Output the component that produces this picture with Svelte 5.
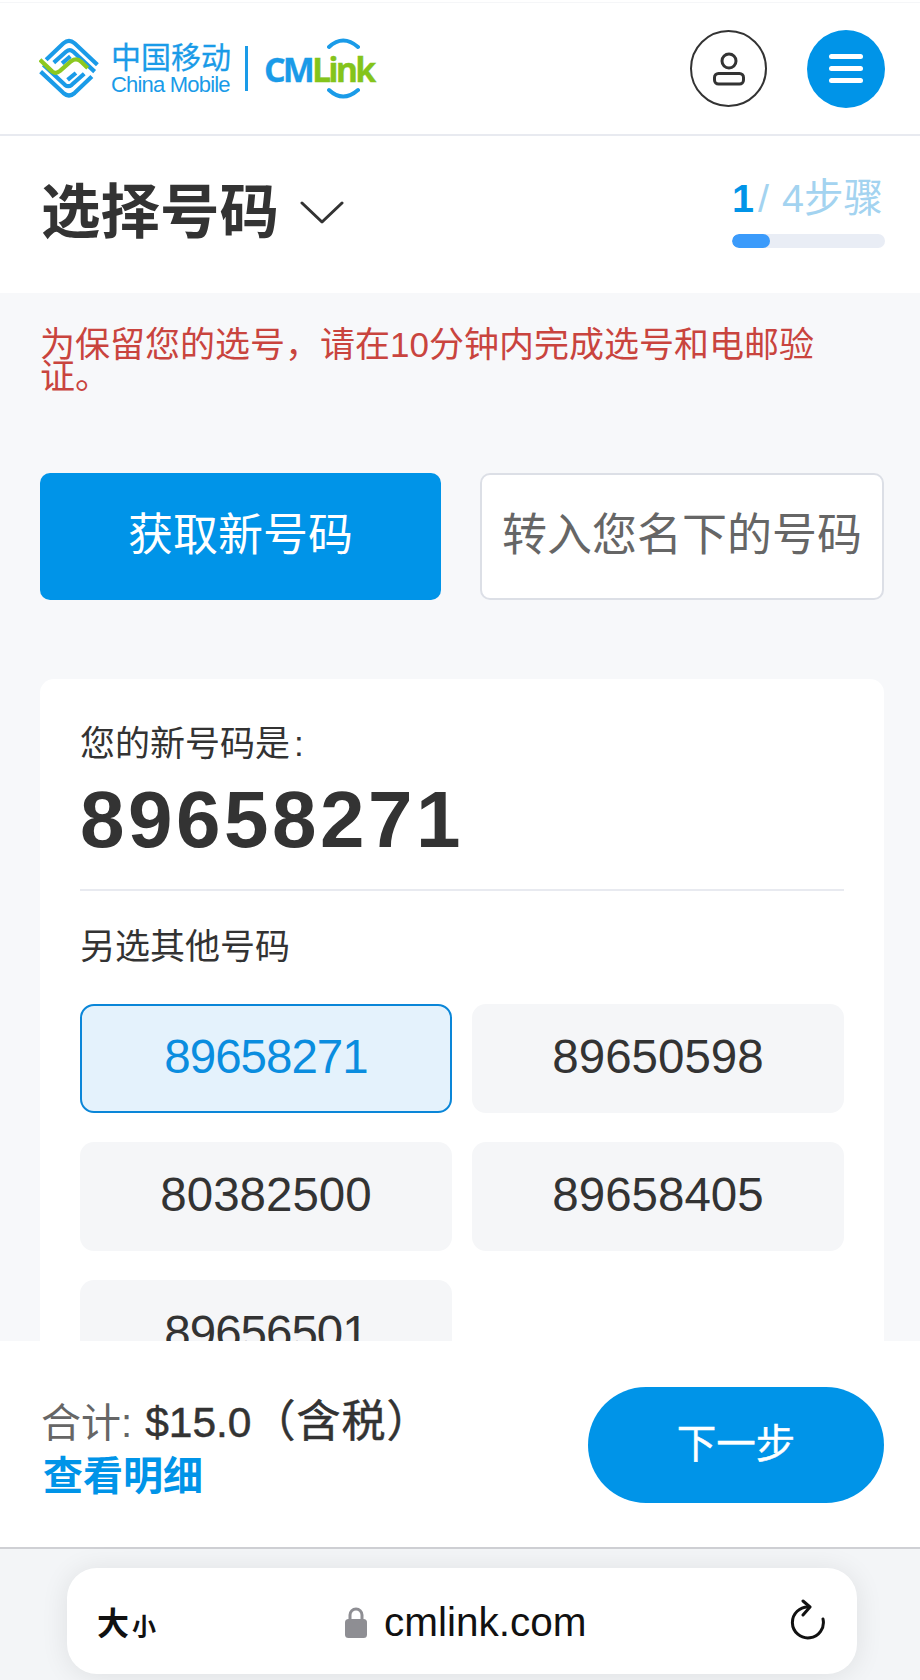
<script>
  const options = [
    { num: '89658271', selected: true, tight: true },
    { num: '89650598', selected: false, tight: false },
    { num: '80382500', selected: false, tight: false },
    { num: '89658405', selected: false, tight: false },
    { num: '89656501', selected: false, tight: true }
  ];
</script>

<div class="page">
  <header class="topbar">
    <div class="logo">
      <svg class="mark" viewBox="32 26 172 182" aria-hidden="true">
        <g fill="none" stroke="#1a9be8" stroke-width="12" stroke-linecap="butt" stroke-linejoin="round">
          <path d="M52 92 L102 44 Q118 30 134 44 L200 106" />
          <path d="M74 100 L110 68 Q120 60 130 68 L192 126" />
          <path d="M98 102 L122 82" />
          <path d="M184 140 L134 188 Q118 202 102 188 L36 126" />
          <path d="M162 132 L126 164 Q116 172 106 164 L44 106" />
          <path d="M138 130 L114 150" />
        </g>
        <path d="M34 92 L70 126 Q80 134 92 124 L124 96 Q140 84 154 98 L172 116" fill="none" stroke="#8cc820" stroke-width="12" />
      </svg>
      <div class="brand-text">
        <span class="cn">中国移动</span>
        <span class="en">China Mobile</span>
      </div>
      <span class="sep"></span>
      <div class="cmlink">
        <svg class="arcs" viewBox="0 0 33 62" aria-hidden="true">
          <path d="M2 9 Q16 -4 31 9" fill="none" stroke="#1a9be8" stroke-width="4" stroke-linecap="round" />
          <path d="M2 52 Q16 65 31 52" fill="none" stroke="#1a9be8" stroke-width="4" stroke-linecap="round" />
        </svg>
        <span class="cm">CM</span><span class="link">Link</span>
      </div>
    </div>
    <div class="top-actions">
      <button class="round user" aria-label="账户">
        <svg viewBox="0 0 40 40" width="40" height="40" aria-hidden="true">
          <circle cx="20" cy="12" r="7" fill="none" stroke="#333" stroke-width="3" />
          <rect x="5.500" y="24.500" width="29" height="10.500" rx="4" fill="none" stroke="#333" stroke-width="3" />
        </svg>
      </button>
      <button class="round menu" aria-label="菜单">
        <span></span><span></span><span></span>
      </button>
    </div>
  </header>

  <section class="title-row">
    <div class="title">
      <h1>选择号码</h1>
      <svg class="chevron" viewBox="0 0 44 24" aria-hidden="true">
        <path d="M2 3 L22 22 L42 3" fill="none" stroke="#333" stroke-width="3" stroke-linecap="round" stroke-linejoin="round" />
      </svg>
    </div>
    <div class="steps">
      <div class="steps-text"><b>1</b><span>/ 4步骤</span></div>
      <div class="track"><div class="fill" style="width: 25%"></div></div>
    </div>
  </section>

  <main class="content">
    <p class="warning">为保留您的选号，请在10分钟内完成选号和电邮验证。</p>

    <div class="choice">
      <button class="choice-btn on">获取新号码</button>
      <button class="choice-btn off">转入您名下的号码</button>
    </div>

    <section class="card">
      <div class="label">您的新号码是<span class="colon">:</span></div>
      <div class="big">89658271</div>
      <hr />
      <div class="label other">另选其他号码</div>
      <div class="grid">
        {#each options as o}
          <button class="opt" class:selected={o.selected} class:tight={o.tight}>{o.num}</button>
        {/each}
      </div>
    </section>
  </main>

  <footer class="summary">
    <div class="price">
      <div class="total"><span class="t-label">合计:</span><span class="t-value">$15.0<span class="tax">（含税）</span></span></div>
      <a class="details" href="#details">查看明细</a>
    </div>
    <button class="next">下一步</button>
  </footer>

  <div class="browser">
    <div class="pill">
      <span class="aa"><b>大</b><b class="small">小</b></span>
      <span class="url">
        <svg class="lock" viewBox="0 0 22 32" aria-hidden="true">
          <path d="M5 15 V9 A6 6 0 0 1 17 9 V15" fill="none" stroke="#8e8e93" stroke-width="3" />
          <rect x="0" y="13" width="22" height="19" rx="3.500" fill="#8e8e93" />
        </svg>
        cmlink.com
      </span>
      <svg class="reload" viewBox="0 0 36 44" aria-hidden="true">
        <path d="M19 8 A15.500 15.500 0 1 0 33 20" fill="none" stroke="#111" stroke-width="3" stroke-linecap="round" />
        <path d="M13 2 L20 8 L13 16" fill="none" stroke="#111" stroke-width="3" stroke-linecap="round" stroke-linejoin="round" />
      </svg>
    </div>
  </div>
</div>

<style>
  :global(body) {
    margin: 0;
    background: #fff;
  }

  .page {
    width: 920px;
    height: 1680px;
    display: flex;
    flex-direction: column;
    overflow: hidden;
    color: #333;
    font-family: "Liberation Sans", "Noto Sans CJK SC", sans-serif;
  }

  button {
    font-family: inherit;
    border: 0;
    padding: 0;
    margin: 0;
  }

  .topbar {
    flex: none;
    height: 131px;
    margin-top: 2px;
    border-top: 1px solid #f5f6f8;
    border-bottom: 2px solid #e8eaf0;
    display: flex;
    align-items: center;
    justify-content: space-between;
    padding: 0 35px 0 39px;
    box-sizing: content-box;
    background: #fff;
  }

  .logo {
    display: flex;
    align-items: center;
  }

  .mark {
    width: 60px;
    height: 63px;
    display: block;
  }

  .brand-text {
    margin-left: 12px;
    display: flex;
    flex-direction: column;
    color: #1a9be8;
  }

  .cn {
    font-size: 30px;
    line-height: 33px;
    white-space: nowrap;
    -webkit-text-stroke: 0.300px #1a9be8;
  }

  .en {
    font-size: 22px;
    line-height: 22px;
    letter-spacing: -0.800px;
    white-space: nowrap;
  }

  .sep {
    width: 3px;
    height: 45px;
    margin-left: 14px;
    background: #1a9be8;
  }

  .cmlink {
    margin-left: 16px;
    position: relative;
    font-family: "Open Sans", sans-serif;
    font-weight: 700;
    font-size: 34px;
    line-height: 62px;
    letter-spacing: -2.900px;
    white-space: nowrap;
    -webkit-text-stroke: 0.300px currentColor;
  }

  .arcs {
    position: absolute;
    left: 63px;
    top: 0;
    width: 33px;
    height: 62px;
  }

  .cm {
    color: #1a9be8;
  }

  .link {
    color: #84c41b;
  }

  .top-actions {
    display: flex;
    align-items: center;
    gap: 40px;
  }

  .round {
    width: 78px;
    height: 78px;
    border-radius: 50%;
    box-sizing: border-box;
    display: flex;
    align-items: center;
    justify-content: center;
  }

  .user {
    width: 77px;
    height: 77px;
    background: #fff;
    border: 2px solid #333;
  }

  .menu {
    background: #0094e8;
    flex-direction: column;
    gap: 7px;
  }

  .menu span {
    display: block;
    width: 34px;
    height: 5px;
    border-radius: 3px;
    background: #fff;
  }

  .title-row {
    flex: none;
    height: 157px;
    background: #fff;
    display: flex;
    justify-content: space-between;
    padding: 0 35px 0 41px;
  }

  .title {
    display: flex;
    align-items: center;
    gap: 21px;
    height: 154px;
  }

  h1 {
    margin: 0;
    font-size: 59.500px;
    font-weight: 700;
    line-height: 70px;
    color: #333;
  }

  .chevron {
    width: 44px;
    height: 24px;
    margin-top: -2px;
  }

  .steps {
    width: 153px;
    padding-top: 38px;
  }

  .steps-text {
    font-size: 39.500px;
    line-height: 48px;
    white-space: nowrap;
    word-spacing: 2px;
    color: #a3d3f0;
  }

  .steps-text b {
    color: #0094e8;
    font-weight: 700;
    margin-right: 6px;
    letter-spacing: -2px;
  }

  .track {
    margin-top: 12px;
    height: 14px;
    border-radius: 7px;
    background: #e9edf5;
    overflow: hidden;
  }

  .fill {
    height: 100%;
    border-radius: 7px;
    background: #3b9bfb;
  }

  .content {
    flex: 1;
    min-height: 0;
    overflow: hidden;
    background: #f7f8fa;
    padding: 36px 36px 0 40px;
  }

  .warning {
    margin: 0;
    max-width: 830px;
    font-size: 35px;
    line-height: 32px;
    color: #c9443e;
  }

  .choice {
    margin-top: 80px;
    display: grid;
    grid-template-columns: 401px 404px;
    gap: 39px;
  }

  .choice-btn {
    height: 127px;
    border-radius: 10px;
    font-size: 45px;
    white-space: nowrap;
    box-sizing: border-box;
    padding-bottom: 11px;
  }

  .on {
    background: #0094e8;
    color: #fff;
  }

  .off {
    background: #fff;
    color: #666;
    border: 2px solid #dcdfe6;
  }

  .card {
    margin-top: 79px;
    background: #fff;
    border-radius: 14px;
    padding: 45px 40px 60px;
  }

  .label {
    font-size: 35px;
    line-height: 40px;
    color: #333;
  }

  .colon {
    margin-left: 4px;
  }

  .big {
    margin-top: 11px;
    font-size: 80px;
    line-height: 90px;
    font-weight: 700;
    letter-spacing: 3.500px;
    color: #333;
  }

  hr {
    margin: 24px 0 0;
    border: 0;
    height: 2px;
    background: #e8eaf0;
  }

  .other {
    margin-top: 36px;
  }

  .grid {
    margin-top: 37px;
    display: grid;
    grid-template-columns: 372px 372px;
    column-gap: 20px;
    row-gap: 29px;
  }

  .opt {
    height: 109px;
    border-radius: 14px;
    background: #f5f6f8;
    color: #333;
    font-size: 47.500px;
    box-sizing: border-box;
    padding-bottom: 4px;
  }

  .tight {
    letter-spacing: -1px;
  }

  .selected {
    background: #e4f2fc;
    border: 2px solid #0a86d8;
    color: #0a8ddf;
  }

  .summary {
    flex: none;
    height: 206px;
    background: #fff;
    border-bottom: 2px solid #cfd0d4;
    display: flex;
    align-items: center;
    justify-content: space-between;
    padding: 0 36px 0 41px;
  }

  .price {
    margin-top: 7px;
  }

  .total {
    white-space: nowrap;
    line-height: 56px;
  }

  .t-label {
    font-size: 40px;
    color: #666;
  }

  .t-value {
    margin-left: 13px;
    font-size: 42.500px;
    color: #333;
    -webkit-text-stroke: 0.500px #333;
  }

  .tax {
    font-size: 44px;
    letter-spacing: 1px;
  }

  .details {
    display: block;
    margin-top: -9px;
    margin-left: 2px;
    font-size: 40px;
    line-height: 50px;
    font-weight: 700;
    color: #0094e8;
    text-decoration: none;
  }

  .next {
    width: 296px;
    height: 116px;
    margin-top: 1px;
    border-radius: 58px;
    background: #0094e8;
    color: #fff;
    font-size: 39.500px;
    padding-bottom: 9px;
    -webkit-text-stroke: 0.400px #fff;
  }

  .browser {
    flex: none;
    height: 131px;
    box-sizing: border-box;
    padding: 19px 63px 6px 67px;
    background: #f3f5f7;
  }

  .pill {
    height: 106px;
    background: #fff;
    border-radius: 30px;
    box-shadow: 0 2px 28px rgba(0, 0, 0, 0.09);
    display: flex;
    align-items: center;
    justify-content: space-between;
    padding: 0 31px 0 30px;
    color: #111;
  }

  .aa {
    display: flex;
    align-items: baseline;
    width: 60px;
    font-size: 32px;
    color: #111;
  }

  .aa b {
    font-weight: 700;
  }

  .aa .small {
    font-size: 24px;
    margin-left: 3px;
  }

  .url {
    display: flex;
    align-items: center;
    gap: 17px;
    font-size: 40.500px;
    margin-left: 188px;
    margin-top: 2px;
  }

  .lock {
    width: 22px;
    height: 32px;
  }

  .reload {
    width: 36px;
    height: 44px;
    margin-left: auto;
  }
</style>
